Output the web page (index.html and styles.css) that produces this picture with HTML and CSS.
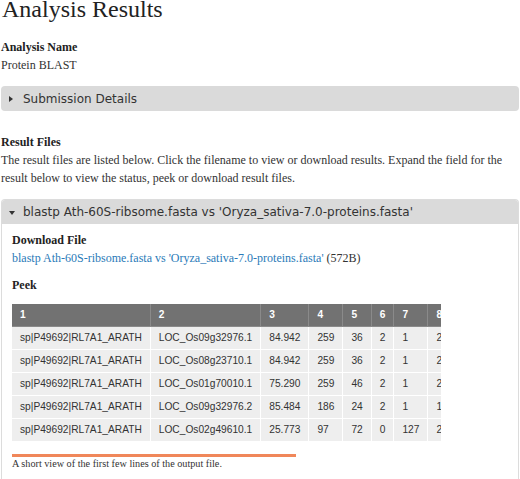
FILE: index.html
```html
<!DOCTYPE html>
<html lang="en">
<head>
  <meta charset="UTF-8">
  <meta name="viewport" content="width=device-width, initial-scale=1.0">
  <title>Analysis Results</title>
  <link rel="stylesheet" href="styles.css">
</head>
<body>
  <h1 class="page-title">Analysis Results</h1>

  <div class="field">
    <div class="field-label">Analysis Name</div>
    <div class="field-value">Protein BLAST</div>
  </div>

  <div class="fieldset collapsed">
    <div class="fieldset-legend"><span class="arrow"></span>Submission Details</div>
  </div>

  <div class="field result-files">
    <div class="field-label">Result Files</div>
    <p class="field-value">The result files are listed below. Click the filename to view or download results. Expand the field for the result below to view the status, peek or download result files.</p>
  </div>

  <div class="fieldset open">
    <div class="fieldset-legend"><span class="arrow"></span>blastp Ath-60S-ribsome.fasta vs 'Oryza_sativa-7.0-proteins.fasta'</div>
    <div class="fieldset-body">
      <div class="field">
        <div class="field-label">Download File</div>
        <div class="field-value"><a href="#">blastp Ath-60S-ribsome.fasta vs 'Oryza_sativa-7.0-proteins.fasta'</a> (572B)</div>
      </div>

      <div class="field peek">
        <div class="field-label">Peek</div>
        <div class="peek-scroll">
          <table class="peek-table">
            <thead>
              <tr>
                <th>1</th><th>2</th><th>3</th><th>4</th><th>5</th><th>6</th>
                <th>7</th><th>8</th><th>9</th><th>10</th><th>11</th><th>12</th>
              </tr>
            </thead>
            <tbody>
              <tr>
                <td>sp|P49692|RL7A1_ARATH</td><td>LOC_Os09g32976.1</td><td>84.942</td><td>259</td><td>36</td><td>2</td>
                <td>1</td><td>259</td><td>1</td><td>257</td><td>1.59e-162</td><td>452</td>
              </tr>
              <tr>
                <td>sp|P49692|RL7A1_ARATH</td><td>LOC_Os08g23710.1</td><td>84.942</td><td>259</td><td>36</td><td>2</td>
                <td>1</td><td>259</td><td>1</td><td>257</td><td>2.31e-162</td><td>451</td>
              </tr>
              <tr>
                <td>sp|P49692|RL7A1_ARATH</td><td>LOC_Os01g70010.1</td><td>75.290</td><td>259</td><td>46</td><td>2</td>
                <td>1</td><td>259</td><td>1</td><td>256</td><td>5.77e-142</td><td>399</td>
              </tr>
              <tr>
                <td>sp|P49692|RL7A1_ARATH</td><td>LOC_Os09g32976.2</td><td>85.484</td><td>186</td><td>24</td><td>2</td>
                <td>1</td><td>186</td><td>1</td><td>184</td><td>8.02e-114</td><td>325</td>
              </tr>
              <tr>
                <td>sp|P49692|RL7A1_ARATH</td><td>LOC_Os02g49610.1</td><td>25.773</td><td>97</td><td>72</td><td>0</td>
                <td>127</td><td>223</td><td>16</td><td>112</td><td>0.011</td><td>33.5</td>
              </tr>
            </tbody>
          </table>
        </div>
        <!-- horizontal scroll position of the peek table -->
        <div class="peek-scrollbar"><div class="peek-scrollbar-thumb"></div></div>
        <div class="peek-caption">A short view of the first few lines of the output file.</div>
      </div>
    </div>
  </div>
</body>
</html>
```

FILE: styles.css
```css
body {
  font-family: "Liberation Serif", "Times New Roman", serif;
  font-size: 12px;
  line-height: 18px;
  color: #333;
  margin: 0;
  padding: 0 1px;
  background: #fff;
}
.page-title {
  font-size: 24px;
  font-weight: normal;
  line-height: 19px;
  margin: 0 0 19px 1px;
  color: #222;
}
.field-label {
  font-weight: bold;
  color: #222;
}
.field-value {
  margin: 0;
}
.field {
  margin-bottom: 12px;
}
.result-files {
  margin-top: 22px;
  margin-bottom: 12px;
}
a {
  color: #2a7ab8;
  text-decoration: none;
}

/* collapsible fieldsets */
.fieldset {
  border-radius: 4px;
}
.fieldset-legend {
  display: flex;
  align-items: center;
  font-family: "DejaVu Sans", Verdana, sans-serif;
  font-size: 12px;
  color: #333;
  background: #dadada;
  padding-left: 8px;
}
.arrow {
  width: 0;
  height: 0;
  margin-right: 10px;
}
.collapsed .fieldset-legend {
  height: 25px;
  border-radius: 4px;
}
.collapsed .arrow {
  border-left: 4px solid #333;
  border-top: 3px solid transparent;
  border-bottom: 3px solid transparent;
  margin-top: 1px;
}
.open {
  border: 1px solid #dcdcdc;
  border-bottom: none;
}
.open .fieldset-legend {
  height: 24px;
  border-radius: 3px 3px 0 0;
  padding-left: 7px;
}
.open .arrow {
  border-top: 4px solid #333;
  border-left: 3px solid transparent;
  border-right: 3px solid transparent;
  margin-right: 8px;
  margin-top: 2px;
}
.fieldset-body {
  padding: 7px 10px 20px;
}
.fieldset-body .field {
  margin-bottom: 9px;
}
.peek .field-label {
  margin-bottom: 10px;
}

/* peek table */
.peek-scroll {
  width: 429px;
  overflow: hidden;
}
.peek-scrollbar {
  width: 429px;
  height: 3px;
  margin-top: 12px;
}
.peek-scrollbar-thumb {
  width: 284px;
  height: 100%;
  background: #f0875a;
}
.peek-table {
  border-collapse: collapse;
  font-family: "Liberation Sans", Arial, sans-serif;
  font-size: 10.2px;
  line-height: 14px;
  white-space: nowrap;
}
.peek-table th,
.peek-table td {
  padding: 4px 8px;
  text-align: left;
  border: 1px solid #fff;
}
.peek-table tr > :first-child {
  border-left: none;
}
.peek-table thead tr > * {
  border-top: none;
}
.peek-table th {
  background: #727272;
  color: #fff;
  border-color: #8a8a8a;
}
.peek-table td {
  background: #eee;
  color: #333;
}
.peek-caption {
  font-size: 10.2px;
  line-height: 14px;
}
```
